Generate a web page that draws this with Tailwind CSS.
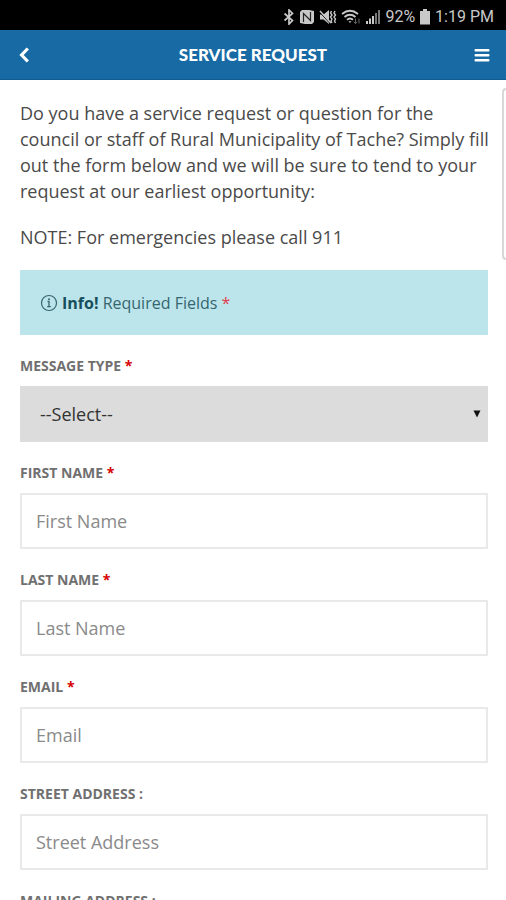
<!DOCTYPE html>
<html lang="en">
<head>
<meta charset="utf-8">
<meta name="viewport" content="width=device-width, initial-scale=1">
<title>Service Request</title>
<script src="https://cdn.jsdelivr.net/npm/@tailwindcss/browser@4"></script>
</head>
<body class="relative flex h-screen flex-col overflow-hidden bg-white font-['Open_Sans',sans-serif] text-[#4a4a4a]">
  <!-- Device status bar -->
  <div class="flex h-[30px] shrink-0 items-center justify-end gap-1 bg-black pr-3 pt-[3px] font-['Roboto',sans-serif] text-base text-[#c8c8c8]">
    <svg class="h-4 w-3" viewBox="0 0 12 16" fill="none" stroke="currentColor" stroke-width="1.700" aria-hidden="true"><path d="M1.500 4.500 9.500 11.500 6 15V1l3.500 3.500-8 7"/></svg>
    <svg class="h-4 w-4" viewBox="0 0 16 16" aria-hidden="true"><path d="M3 1h7l5 1v11l-2 2H6l-5-1V3z" fill="currentColor"/><path d="M4.500 13V4.500L11.500 11.500V3" fill="none" stroke="#222" stroke-width="1.200"/></svg>
    <svg class="h-4 w-[18px]" viewBox="0 0 18 16" aria-hidden="true"><path d="M1 5.500h3.500L10 1v14l-5.500-4.500H1z" fill="currentColor"/><path d="M1 3.500l10 11" stroke="#000" stroke-width="1"/><path d="M1 2l11 12" stroke="currentColor" stroke-width="1.500"/><path d="M12.500 2l-1 2 1.500 2-1.500 2 1.500 2-1 2 1 2M16 2l-1 2 1.500 2-1.500 2 1.500 2-1 2 1 2" fill="none" stroke="currentColor" stroke-width="1.400"/></svg>
    <svg class="h-4 w-5" viewBox="0 0 20 16" fill="none" stroke="currentColor" stroke-width="1.900" aria-hidden="true"><path d="M1 5Q9 -1.500 17 5M3.500 8Q9 3.500 14.500 8M6 10.800Q9 8.300 12 10.800"/><path d="M7.500 12.200h3L9 14z" fill="currentColor" stroke="none"/><path d="M14.500 9.500v5M12.800 12.800l1.700 1.900 1.700-1.900M18 14.500v-5" stroke="#666" stroke-width="1"/></svg>
    <svg class="h-4 w-4" viewBox="0 0 16 16" fill="currentColor" aria-hidden="true"><path d="M1 12h2v3H1zM4 9.500h2V15H4zM7 7h2v8H7z"/><path d="M10 4h2v11h-2zM13 1h2v14h-2z" fill="#777"/></svg>
    <span>92%</span>
    <svg class="h-4 w-3" viewBox="0 0 12 16" fill="currentColor" aria-hidden="true"><path d="M4 0h4v2h3v13.500H1V2h3z"/></svg>
    <span>1:19 PM</span>
  </div>

  <header class="flex h-[50px] shrink-0 items-center justify-between border-b border-[#105c8e] bg-[#186aa4] px-4 text-white">
    <button type="button" aria-label="Back" class="flex w-4 justify-center"><svg class="h-4 w-3" viewBox="0 0 12 16" fill="none" stroke="currentColor" stroke-width="3.200" aria-hidden="true"><path d="M9.800 1.500 3.600 8l6.200 6.500"/></svg></button>
    <h1 class="font-['Lato',sans-serif] text-[17px] font-black">SERVICE REQUEST</h1>
    <button type="button" aria-label="Menu" class="flex w-4 justify-center"><svg class="h-4 w-4" viewBox="0 0 16 16" fill="currentColor" aria-hidden="true"><rect x=".5" y="2" width="15" height="2.500" rx="1"/><rect x=".5" y="7" width="15" height="2.500" rx="1"/><rect x=".5" y="12" width="15" height="2.500" rx="1"/></svg></button>
  </header>

  <main class="min-h-0 flex-1 overflow-y-auto pb-5 pl-5 pr-[18px] pt-5 [scrollbar-width:none]">
    <div class="-mr-3 flex flex-col gap-5 text-[18px] leading-[26px]">
      <p>Do you have a service request or question for the<br>council or staff of Rural Municipality of Tache? Simply fill<br>out the form below and we will be sure to tend to your<br>request at our earliest opportunity:</p>
      <p>NOTE: For emergencies please call 911</p>
    </div>

    <div class="mt-5 flex h-[65px] items-center gap-1 bg-[#bce5eb] px-5 text-base text-[#35656f]">
      <svg class="h-[18px] w-[18px]" viewBox="0 0 18 18" fill="none" stroke="currentColor" aria-hidden="true"><circle cx="9" cy="9" r="7.500" stroke-width="1.200"/><path d="M7.500 7.500H9v5M7.200 12.700h3.600" stroke-width="1.300"/><circle cx="9" cy="5.200" r="1" fill="currentColor" stroke="none"/></svg>
      <p><strong class="text-[#174e5c]">Info!</strong> Required Fields <span class="text-[#e04050]">*</span></p>
    </div>

    <form class="mt-5 flex flex-col gap-5">
      <div class="flex flex-col gap-[10px]">
        <label for="type" class="text-sm/[21px] font-bold text-[#707070]">MESSAGE TYPE <span class="text-[#d60000]">*</span></label>
        <div class="relative">
          <select id="type" class="block h-14 w-full appearance-none bg-[#dcdcdc] px-5 text-[18px] text-[#333]"><option>--Select--</option></select>
          <svg class="pointer-events-none absolute right-[7px] top-6 h-2 w-2" viewBox="0 0 8 8" fill="#111" aria-hidden="true"><path d="M.5.500h7L4 7.500z"/></svg>
        </div>
      </div>
      <div class="flex flex-col gap-[10px]">
        <label for="first" class="text-sm/[21px] font-bold text-[#707070]">FIRST NAME <span class="text-[#d60000]">*</span></label>
        <input id="first" type="text" placeholder="First Name" class="h-14 w-full border-2 border-[#e9e9e9] px-[14px] text-[18px] placeholder:text-[#8a8a8a]">
      </div>
      <div class="flex flex-col gap-[10px]">
        <label for="last" class="text-sm/[21px] font-bold text-[#707070]">LAST NAME <span class="text-[#d60000]">*</span></label>
        <input id="last" type="text" placeholder="Last Name" class="h-14 w-full border-2 border-[#e9e9e9] px-[14px] text-[18px] placeholder:text-[#8a8a8a]">
      </div>
      <div class="flex flex-col gap-[10px]">
        <label for="email" class="text-sm/[21px] font-bold text-[#707070]">EMAIL <span class="text-[#d60000]">*</span></label>
        <input id="email" type="email" placeholder="Email" class="h-14 w-full border-2 border-[#e9e9e9] px-[14px] text-[18px] placeholder:text-[#8a8a8a]">
      </div>
      <div class="flex flex-col gap-[10px]">
        <label for="street" class="text-sm/[21px] font-bold text-[#707070]">STREET ADDRESS :</label>
        <input id="street" type="text" placeholder="Street Address" class="h-14 w-full border-2 border-[#e9e9e9] px-[14px] text-[18px] placeholder:text-[#8a8a8a]">
      </div>
      <div class="flex flex-col gap-[10px]">
        <label for="mailing" class="text-sm/[21px] font-bold text-[#707070]">MAILING ADDRESS :</label>
        <input id="mailing" type="text" placeholder="Mailing Address" class="h-14 w-full border-2 border-[#e9e9e9] px-[14px] text-[18px] placeholder:text-[#8a8a8a]">
      </div>
    </form>
  </main>

  <!-- Edge panel handle -->
  <div class="absolute right-0 top-[88px] h-[172px] w-1 rounded-l border-2 border-r-0 border-[#d8d8d8] bg-white"></div>
</body>
</html>
